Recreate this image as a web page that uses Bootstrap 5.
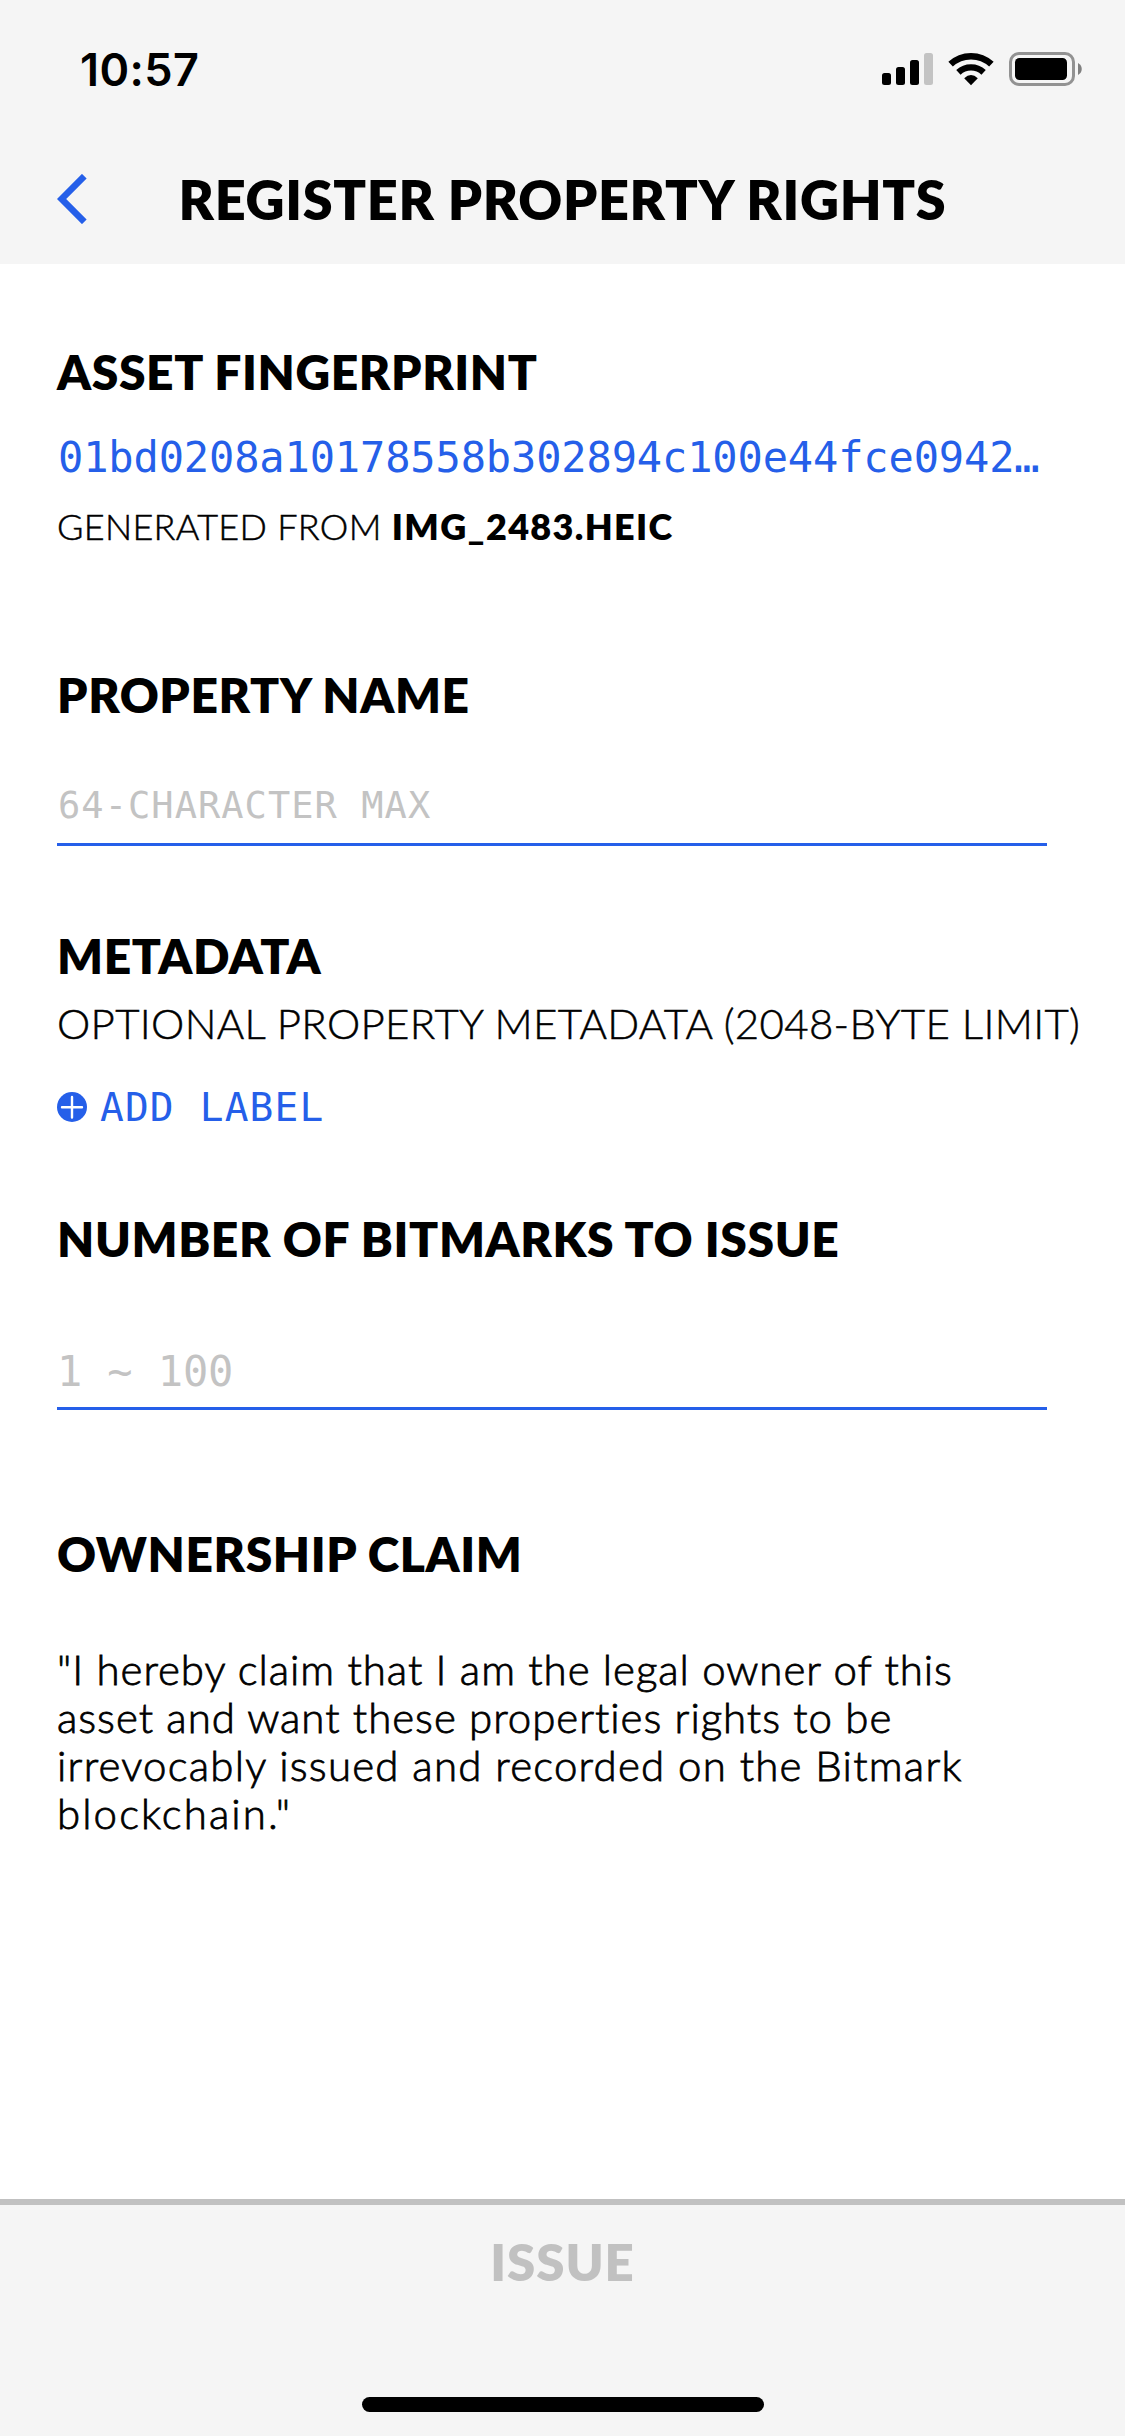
<!DOCTYPE html>
<html lang="en">
<head>
<meta charset="utf-8">
<meta name="viewport" content="width=device-width, initial-scale=1">
<title>Register Property Rights</title>
<link href="https://cdn.jsdelivr.net/npm/bootstrap@5.3.0/dist/css/bootstrap.min.css" rel="stylesheet">
<style>
  body { font-family: Lato, "Open Sans", sans-serif; color: #000; background: #fff; }
  .screen { height: 2436px; width: 1125px; overflow: hidden; }
  .app-top, .app-bottom { background: #f5f5f5; }
  .status-bar { height: 138px; padding: 0 43px 0 80px; }
  .clock { font: 600 45px/54px Inter, sans-serif; letter-spacing: .4px; padding-top: 1px; }
  .nav-row { padding: 29px 57px 31px; }
  .nav-title { font-size: 54px; line-height: 66px; font-weight: 800; letter-spacing: .68px; }
  .nav-side { width: 31px; }
  .nav-row svg { margin-top: -3px; }
  .form-area { padding: 78px 0 0 57px; }
  .sec-title { font-size: 48px; line-height: 60px; font-weight: 800; letter-spacing: .6px; margin: 0; }
  .sec-name { margin-top: 117px; }
  .sec-meta { margin-top: 80px; }
  .sec-count { margin-top: 77px; }
  .sec-claim { margin-top: 114px; }
  .mono { font-family: "DejaVu Sans Mono", monospace; }
  .blue { color: #255fe9; }
  .fingerprint { font-size: 42px; line-height: 50px; letter-spacing: -.12px; margin-top: 31px; padding-left: 1px; }
  .source { font-size: 36px; line-height: 44px; margin-top: 21px; font-weight: 300; letter-spacing: .3px; -webkit-text-stroke: .5px #000; }
  .source b { font-weight: 800; letter-spacing: 1.35px; -webkit-text-stroke: 0; }
  .line-input { width: 990px; height: 66px; border: 0; border-bottom: 3px solid #255fe9; border-radius: 0; background: none; line-height: 50px; }
  .line-input::placeholder { color: #c3c3c3; opacity: 1; }
  .line-input:focus { box-shadow: none; }
  .name-input { font-size: 37px; letter-spacing: 1.05px; padding: 0 0 13px 1px; margin-top: 55px; }
  .count-input { font-size: 42px; letter-spacing: -.1px; height: 65px; padding: 1px 0 11px; margin-top: 76px; }
  .hint { font-size: 42px; line-height: 50px; font-weight: 300; letter-spacing: .33px; margin-top: 12px; -webkit-text-stroke: .5px #000; }
  .add-label { font-size: 39.5px; line-height: 50px; letter-spacing: 1.15px; margin-top: 34px; gap: 13px; }
  .claim { font-size: 42px; line-height: 48px; font-weight: 300; letter-spacing: .95px; margin: 61px 0 0; -webkit-text-stroke: .8px #000; }
  .claim-wide { letter-spacing: 1.23px; }
  .claim-end { letter-spacing: 2.1px; }
  .app-bottom { height: 237px; border-top: 6px solid #c1c1c1; padding: 27px 0 24px; }
  .issue { font-size: 51px; line-height: 60px; font-weight: 800; color: #c1c1c1; letter-spacing: .9px; }
  .home-bar { width: 402px; height: 15px; background: #000; }
</style>
</head>
<body>
<div class="screen d-flex flex-column">
  <header class="app-top flex-shrink-0">
    <div class="status-bar d-flex align-items-center justify-content-between">
      <span class="clock">10:57</span>
      <svg width="200" height="34" viewBox="882 52 200 34" aria-hidden="true">
        <rect x="882" y="73" width="9" height="12" rx="2.5"/>
        <rect x="896" y="67" width="9" height="18" rx="2.5"/>
        <rect x="910" y="60" width="9" height="25" rx="2.5"/>
        <rect x="924" y="53" width="9" height="32" rx="2.5" fill="#c3c3c3"/>
        <g fill="none" stroke="#000">
          <path d="M950.6 64.2A30 30 0 0 1 991.4 64.2" stroke-width="6.6"/>
          <path d="M958.4 72.3A18.6 18.6 0 0 1 983.6 72.3" stroke-width="6.4"/>
        </g>
        <path d="M964.2 78.3Q971 71.7 977.8 78.3L971 85.2Z"/>
        <rect x="1010.5" y="53.5" width="63" height="31" rx="8.5" fill="none" stroke="#929292" stroke-width="3"/>
        <rect x="1015" y="58" width="52" height="22" rx="4.5"/>
        <path d="M1078 63C1083 65.500 1083 72.500 1078 75Z" fill="#808080"/>
      </svg>
    </div>
    <nav class="nav-row d-flex align-items-center justify-content-between">
      <svg class="nav-side" width="31" height="50" viewBox="0 0 31 50" fill="none" stroke="#255fe9" stroke-width="6.600" aria-label="Back"><path d="M27.300 2.200L4.600 25L27.300 47.800"/></svg>
      <h1 class="nav-title m-0">REGISTER PROPERTY RIGHTS</h1>
      <span class="nav-side"></span>
    </nav>
  </header>

  <main class="form-area flex-grow-1 text-nowrap">
    <h2 class="sec-title">ASSET FINGERPRINT</h2>
    <div class="fingerprint mono blue">01bd0208a10178558b302894c100e44fce0942…</div>
    <div class="source">GENERATED FROM <b>IMG_2483.HEIC</b></div>

    <h2 class="sec-title sec-name">PROPERTY NAME</h2>
    <input class="form-control line-input name-input mono" type="text" maxlength="64" placeholder="64-CHARACTER MAX">

    <h2 class="sec-title sec-meta">METADATA</h2>
    <div class="hint">OPTIONAL PROPERTY METADATA (2048-BYTE LIMIT)</div>
    <div class="add-label mono blue d-flex align-items-center">
      <svg width="30" height="30" viewBox="0 0 30 30" aria-hidden="true"><circle cx="15" cy="15" r="15" fill="#255fe9"/><path d="M15 5V25.500M5 15.200H25" stroke="#fff" stroke-width="2.400" stroke-linecap="round"/></svg>
      <span>ADD LABEL</span>
    </div>

    <h2 class="sec-title sec-count">NUMBER OF BITMARKS TO ISSUE</h2>
    <input class="form-control line-input count-input mono" type="text" placeholder="1 ~ 100">

    <h2 class="sec-title sec-claim">OWNERSHIP CLAIM</h2>
    <p class="claim">"I hereby claim that I am the legal owner of this<br>asset and want these properties rights to be<br><span class="claim-wide">irrevocably issued and recorded on the Bitmark</span><br><span class="claim-end">blockchain."</span></p>
  </main>

  <footer class="app-bottom flex-shrink-0 d-flex flex-column align-items-center justify-content-between">
    <div class="issue">ISSUE</div>
    <div class="home-bar rounded-pill"></div>
  </footer>
</div>
<script src="https://cdn.jsdelivr.net/npm/bootstrap@5.3.0/dist/js/bootstrap.bundle.min.js"></script>
</body>
</html>
